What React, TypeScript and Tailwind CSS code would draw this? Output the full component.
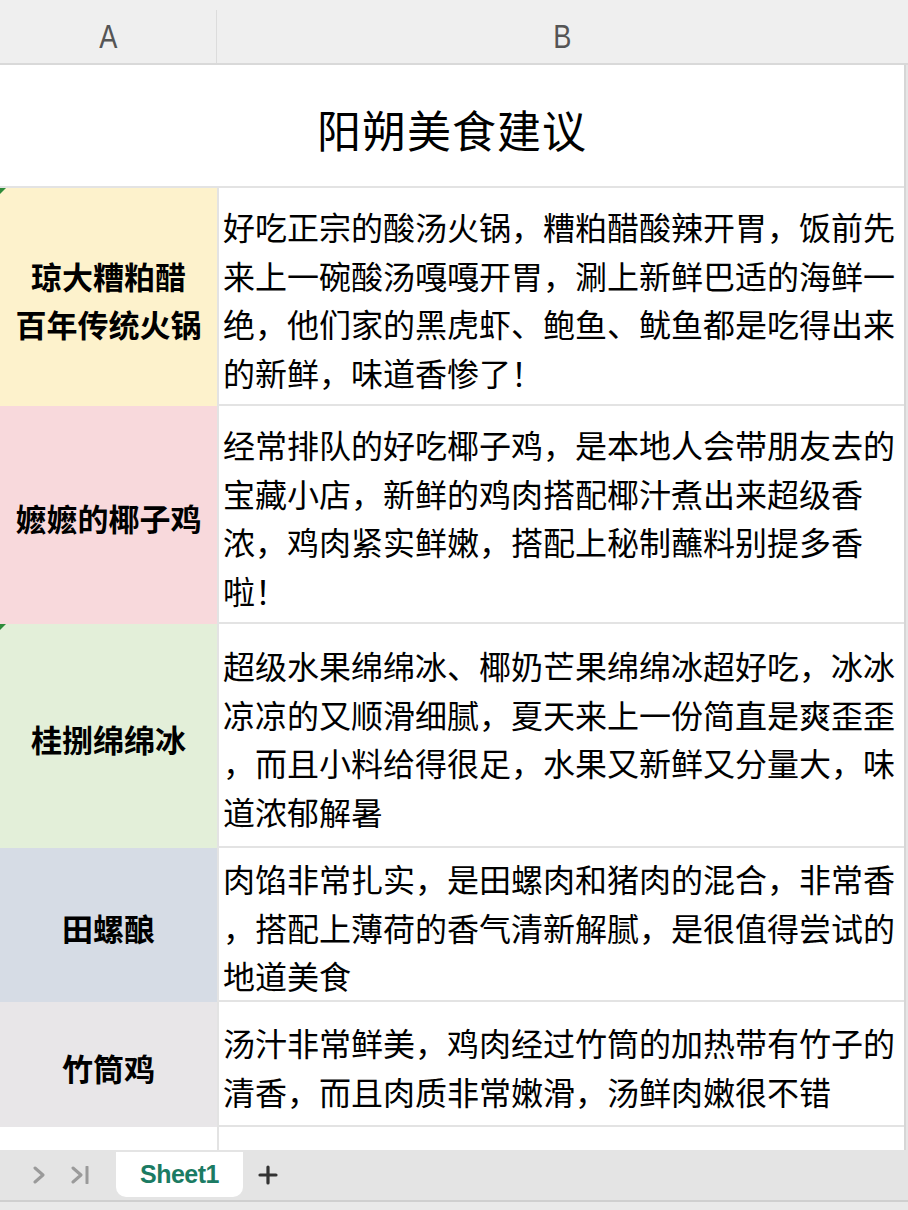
import React from "react";

const rows = [
  {
    name: ["琼大糟粕醋", "百年传统火锅"],
    bg: "bg-[#fdf2cc]",
    h: "h-[218px]",
    mark: true,
    lines: [
      "好吃正宗的酸汤火锅，糟粕醋酸辣开胃，饭前先",
      "来上一碗酸汤嘎嘎开胃，涮上新鲜巴适的海鲜一",
      "绝，他们家的黑虎虾、鲍鱼、鱿鱼都是吃得出来",
      "的新鲜，味道香惨了！",
    ],
  },
  {
    name: ["嬷嬷的椰子鸡"],
    bg: "bg-[#f8d9dc]",
    h: "h-[218px]",
    mark: false,
    lines: [
      "经常排队的好吃椰子鸡，是本地人会带朋友去的",
      "宝藏小店，新鲜的鸡肉搭配椰汁煮出来超级香",
      "浓，鸡肉紧实鲜嫩，搭配上秘制蘸料别提多香",
      "啦！",
    ],
  },
  {
    name: ["桂捌绵绵冰"],
    bg: "bg-[#e3efd9]",
    h: "h-[224px]",
    mark: true,
    lines: [
      "超级水果绵绵冰、椰奶芒果绵绵冰超好吃，冰冰",
      "凉凉的又顺滑细腻，夏天来上一份简直是爽歪歪",
      "，而且小料给得很足，水果又新鲜又分量大，味",
      "道浓郁解暑",
    ],
  },
  {
    name: ["田螺酿"],
    bg: "bg-[#d6dce5]",
    h: "h-[154px]",
    mark: false,
    lines: [
      "肉馅非常扎实，是田螺肉和猪肉的混合，非常香",
      "，搭配上薄荷的香气清新解腻，是很值得尝试的",
      "地道美食",
    ],
  },
  {
    name: ["竹筒鸡"],
    bg: "bg-[#e8e6e8]",
    h: "h-[125px]",
    mark: false,
    lines: [
      "汤汁非常鲜美，鸡肉经过竹筒的加热带有竹子的",
      "清香，而且肉质非常嫩滑，汤鲜肉嫩很不错",
    ],
  },
];

const cjk = "font-['Noto_Sans_CJK_SC',sans-serif]";

export default function App() {
  return (
    <div className={`w-[908px] h-[1210px] bg-[#e6e6e6] flex flex-col overflow-hidden ${cjk}`}>
      {/* column headers */}
      <div className="h-[65px] bg-[#efefef] border-b-2 border-[#d9d9d9] pt-[10px] flex shrink-0 text-[34px] text-[#555] font-['Liberation_Sans',sans-serif]">
        <div className="w-[217px] border-r border-[#dcdcdc] flex items-center justify-center">
          <span className="inline-block scale-x-[0.8]">A</span>
        </div>
        <div className="flex-1 flex items-center justify-center">
          <span className="inline-block scale-x-[0.8]">B</span>
        </div>
      </div>

      {/* sheet body */}
      <div className="w-[906px] bg-white border-r-2 border-[#d6d6d6] flex flex-col shrink-0">
        <div className="h-[123px] border-b-2 border-[#e3e3e3] flex items-center justify-center pt-[6px] text-[44px] text-black font-normal tracking-[1px]">
          阳朔美食建议
        </div>

        {rows.map((r, i) => (
          <div key={i} className={`flex ${r.h}`}>
            <div className={`relative w-[217px] ${r.bg} flex flex-col items-center justify-center pt-[6px] text-[31px] font-bold text-black leading-[48px]`}>
              {r.mark && (
                <span className="absolute left-0 top-0 w-0 h-0 border-t-[6px] border-r-[6px] border-t-[#2e8b3a] border-r-transparent" />
              )}
              {r.name.map((n) => (
                <div key={n} className="whitespace-nowrap">{n}</div>
              ))}
            </div>
            <div className="flex-1 border-l-2 border-b-2 border-[#e3e3e3] flex flex-col justify-center pl-1 pt-[6px] text-[32px] text-black leading-[48.5px]">
              {r.lines.map((l) => (
                <div key={l} className="whitespace-nowrap">{l}</div>
              ))}
            </div>
          </div>
        ))}

        <div className="flex h-[23px]">
          <div className="w-[217px]" />
          <div className="flex-1 border-l-2 border-[#e3e3e3]" />
        </div>
      </div>

      {/* sheet tabs */}
      <div className="h-[50px] bg-[#e4e4e4] flex items-start shrink-0">
        <div className="w-[116px] h-full flex items-center pl-[32px] gap-[24px] text-[#9a9a9a]">
          <svg width="14" height="18" viewBox="0 0 14 18" fill="none">
            <path d="M3 2l8 7-8 7" stroke="currentColor" strokeWidth="3" strokeLinecap="round" strokeLinejoin="round" />
          </svg>
          <svg width="20" height="18" viewBox="0 0 20 18" fill="none">
            <path d="M3 2l8 7-8 7" stroke="currentColor" strokeWidth="3" strokeLinecap="round" strokeLinejoin="round" />
            <path d="M17 1v16" stroke="currentColor" strokeWidth="3" strokeLinecap="round" />
          </svg>
        </div>
        <div className="mt-[2px] w-[127px] h-[45px] bg-white rounded-b-[10px] flex items-center justify-center text-[25px] font-semibold text-[#1b7b63] font-['Liberation_Sans',sans-serif] tracking-[-0.5px]">
          Sheet1
        </div>
        <div className="h-full flex items-center pl-[15px] text-[#333]">
          <svg width="20" height="20" viewBox="0 0 20 20" fill="none">
            <path d="M10 2v16M2 10h16" stroke="currentColor" strokeWidth="3.2" strokeLinecap="round" />
          </svg>
        </div>
      </div>
      <div className="flex-1 border-t-2 border-[#cfcfcf] bg-[#e9e9e9]" />
    </div>
  );
}
